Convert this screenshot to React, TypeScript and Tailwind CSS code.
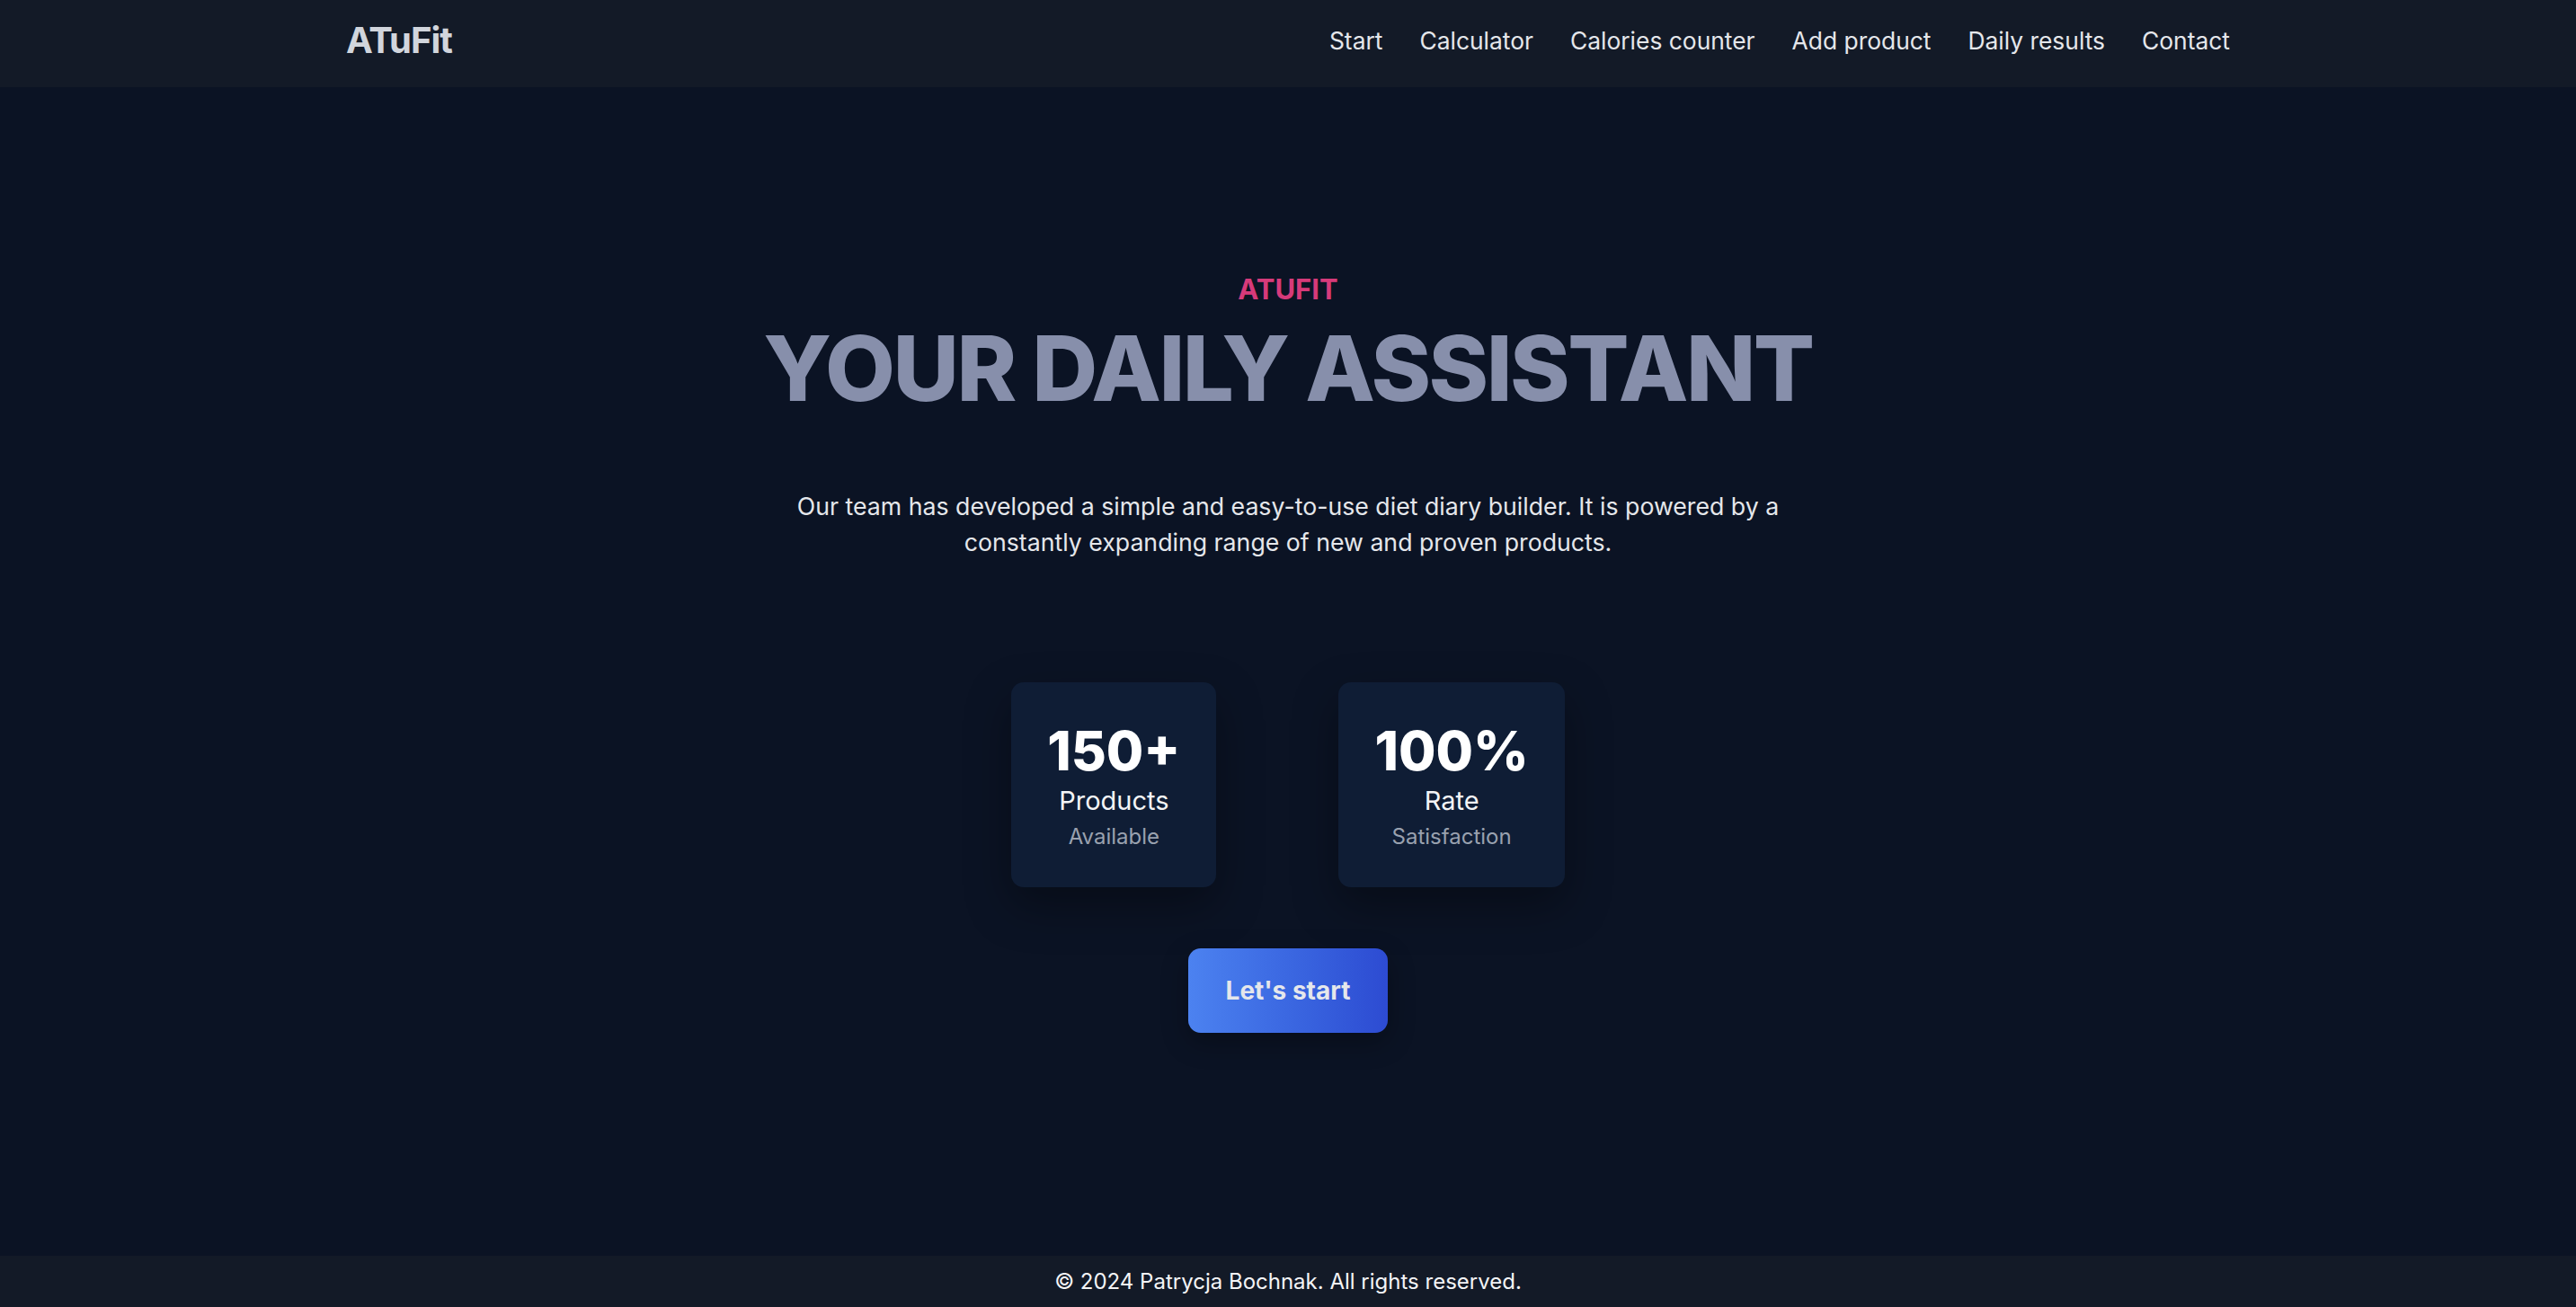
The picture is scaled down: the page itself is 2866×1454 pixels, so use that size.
import React from 'react';

const links = ['Start', 'Calculator', 'Calories counter', 'Add product', 'Daily results', 'Contact'];

const stats = [
  { value: '150+', label: 'Products', sub: 'Available' },
  { value: '100%', label: 'Rate', sub: 'Satisfaction' },
];

export default function App() {
  return (
    <div className="flex min-h-screen flex-col bg-[#0b1324] font-['Inter',sans-serif] text-gray-200">
      <header className="h-[97px] bg-[#131a27]">
        <div className="mx-auto flex h-full w-[2096px] items-center justify-between pb-[8px]">
          <a className="text-[40px] font-bold tracking-tight text-gray-300">ATuFit</a>
          <nav className="flex items-center gap-[41px]">
            {links.map((l) => (
              <a key={l} className="text-[26.4px] leading-[40px] text-gray-200">
                {l}
              </a>
            ))}
          </nav>
        </div>
      </header>

      <main className="flex flex-1 flex-col items-center pt-[201px] text-center">
        <p className="text-[31px] font-bold leading-[48px] text-[#d63a7a]">ATUFIT</p>
        <h1 className="mt-[13px] text-[101px] font-extrabold leading-none tracking-tight text-[#878fab]">
          YOUR DAILY ASSISTANT
        </h1>
        <p className="mt-[83px] w-[1120px] text-[26.7px] leading-[40px] text-gray-200">
          Our team has developed a simple and easy-to-use diet diary builder. It is powered by a constantly expanding
          range of new and proven products.
        </p>

        <div className="mt-[136px] flex gap-[136px]">
          {stats.map((s) => (
            <div
              key={s.value}
              className="rounded-[14px] bg-[#0f1d35] p-10 shadow-[0_20px_50px_rgba(0,0,0,0.35)]"
            >
              <div className="text-[60px] font-extrabold leading-[72px] text-white">{s.value}</div>
              <div className="text-[29px] leading-[40px] text-gray-100">{s.label}</div>
              <div className="mt-1 text-[24px] leading-[32px] text-gray-400">{s.sub}</div>
            </div>
          ))}
        </div>

        <button className="mt-[68px] rounded-[14px] bg-gradient-to-r from-[#4c82f0] to-[#2d4bd2] px-[42px] py-[27px] text-[28px] font-bold leading-[40px] text-gray-200 shadow-[0_10px_30px_rgba(0,0,0,0.3)]">
          Let's start
        </button>
      </main>

      <footer className="flex h-[57px] items-center justify-center bg-[#131a27] text-[24px] text-gray-100">
        © 2024 Patrycja Bochnak. All rights reserved.
      </footer>
    </div>
  );
}
